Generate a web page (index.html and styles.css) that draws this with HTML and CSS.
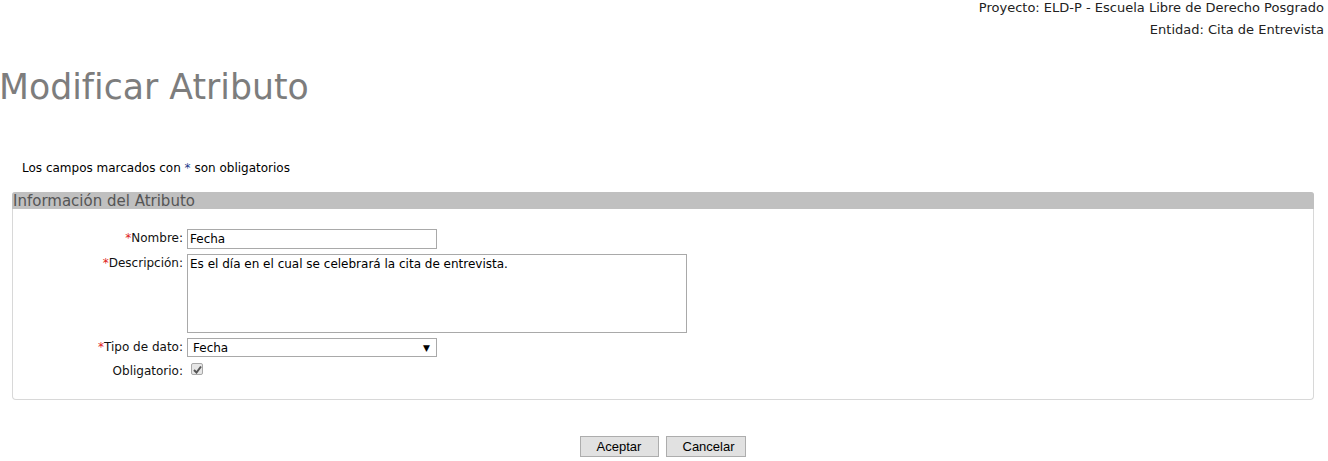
FILE: index.html
```html
<!DOCTYPE html>
<html lang="es">
<head>
<meta charset="utf-8">
<title>Modificar Atributo</title>
<link rel="stylesheet" href="styles.css">
</head>
<body>
<div class="context">
  <div class="ctx-line">Proyecto: ELD-P - Escuela Libre de Derecho Posgrado</div>
  <div class="ctx-line">Entidad: Cita de Entrevista</div>
</div>
<h1 class="title">Modificar Atributo</h1>
<p class="note">Los campos marcados con <span class="star-blue">*</span> son obligatorios</p>
<div class="panel">
  <div class="panel-head">Información del Atributo</div>
  <div class="form">
    <label class="lbl"><span class="req">*</span>Nombre:</label>
    <div class="field"><input class="txt" type="text" value="Fecha"></div>
    <label class="lbl"><span class="req">*</span>Descripción:</label>
    <div class="field"><textarea class="area">Es el día en el cual se celebrará la cita de entrevista.</textarea></div>
    <label class="lbl"><span class="req">*</span>Tipo de dato:</label>
    <div class="field"><div class="select"><span>Fecha</span><span class="arrow">▼</span></div></div>
    <label class="lbl">Obligatorio:</label>
    <div class="field"><span class="check"><svg width="9" height="9" viewBox="0 0 9 9"><path d="M1 5 L3.5 7.5 L8 1.5" fill="none" stroke="#555" stroke-width="2"/></svg></span></div>
  </div>
</div>
<div class="actions">
  <button class="btn">Aceptar</button>
  <button class="btn">Cancelar</button>
</div>
</body>
</html>
```

FILE: styles.css
```css
body {
  margin: 0;
  font-family: "DejaVu Sans", Verdana, sans-serif;
  font-size: 12px;
  color: #000;
  background: #fff;
}
.context {
  display: flex;
  flex-direction: column;
  align-items: flex-end;
  gap: 6px;
  padding: 0 4px 0 0;
  font-size: 13px;
  line-height: 16px;
  color: #222;
}
.title {
  margin: 28px 0 0 -1px;
  font-weight: normal;
  font-size: 34.7px;
  line-height: 42px;
  color: #7d7d7d;
}
.note {
  margin: 53px 0 0 22px;
  font-size: 12px;
  line-height: 15px;
}
.star-blue { color: #1a3a8a; }
.panel {
  margin: 16px 14px 0 12px;
  border: 1px solid #d8d8d8;
  border-top: none;
  border-radius: 4px;
  height: 207px;
}
.panel-head {
  background: #c0c0c0;
  color: #555;
  font-size: 15px;
  line-height: 18px;
  height: 17px;
  padding-left: 1px;
  border-radius: 3px 3px 0 0;
  margin: 0 -1px;
  overflow: hidden;
}
.form {
  display: grid;
  grid-template-columns: 170px auto;
  column-gap: 4px;
  row-gap: 5px;
  padding-top: 20px;
}
.lbl {
  text-align: right;
  font-size: 12px;
  line-height: 16px;
  padding-top: 1px;
  color: #111;
}
.req { color: #e02020; }
.field { display: flex; }
.txt {
  box-sizing: border-box;
  width: 250px;
  height: 20px;
  border: 1px solid #a9a9a9;
  padding: 0 2px;
  font-family: "DejaVu Sans", Verdana, sans-serif;
  font-size: 12px;
  margin: 0;
}
.area {
  box-sizing: border-box;
  width: 500px;
  height: 79px;
  border: 1px solid #a9a9a9;
  padding: 2px 2px;
  font-family: "DejaVu Sans", Verdana, sans-serif;
  font-size: 12px;
  line-height: 15px;
  resize: none;
  margin: 0;
}
.select {
  box-sizing: border-box;
  width: 250px;
  height: 19px;
  border: 1px solid #a9a9a9;
  display: flex;
  justify-content: space-between;
  align-items: center;
  padding: 0 6px 0 5px;
  font-size: 12px;
}
.arrow { font-size: 9px; }
.check {
  margin: 1px 0 0 4px;
  box-sizing: border-box;
  width: 12px;
  height: 12px;
  border: 1px solid #a8a8a8;
  border-radius: 2px;
  background: #e6e6e6;
  display: flex;
  align-items: center;
  justify-content: center;
}
.actions {
  display: flex;
  justify-content: center;
  gap: 7px;
  margin-top: 36px;
  padding-right: 3px;
}
.btn {
  font-family: "Liberation Sans", Arial, sans-serif;
  font-size: 13px;
  height: 21px;
  padding: 0 16px;
  border: 1px solid #adadad;
  background: #e1e1e1;
  color: #000;
  border-radius: 0;
}
.btn:first-child { width: 79px; }
.btn:last-child { width: 80px; }
```
